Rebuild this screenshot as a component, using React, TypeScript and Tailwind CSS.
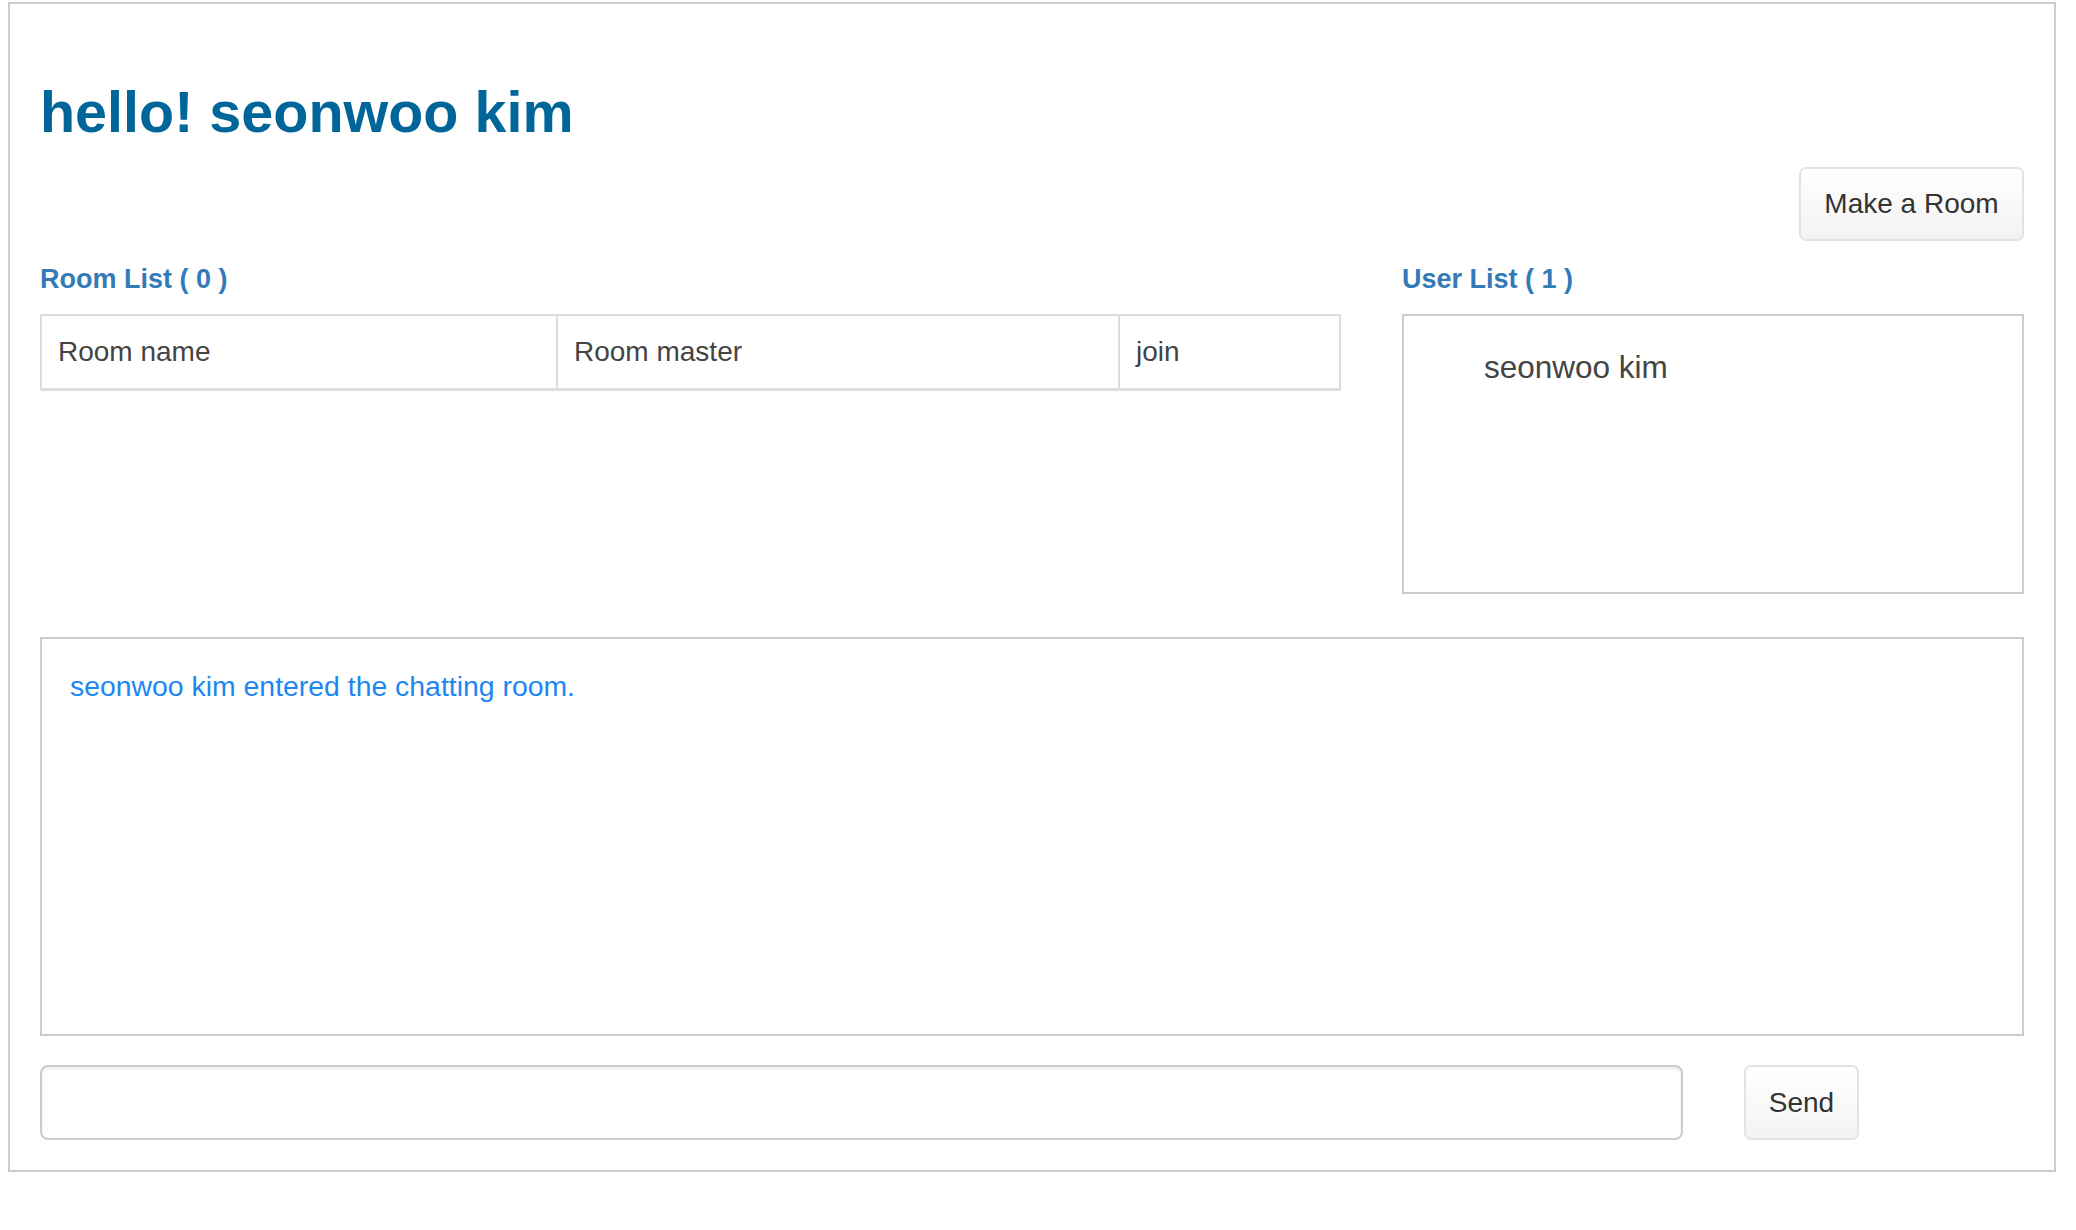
const font = { fontFamily: "'Liberation Sans', Arial, Helvetica, sans-serif" };

function Btn({ children, className = "" }: { children: React.ReactNode; className?: string }) {
  return (
    <button
      className={
        "rounded-[7px] border-2 border-[#e3e3e3] bg-gradient-to-b from-white to-[#f3f3f3] text-[28px] text-[#333] [text-shadow:0_1px_1px_rgba(255,255,255,0.75)] " +
        className
      }
    >
      {children}
    </button>
  );
}

export default function App() {
  const cols = [
    { label: "Room name", w: "w-[514px]" },
    { label: "Room master", w: "w-[562px]" },
    { label: "join", w: "flex-1" },
  ];

  return (
    <div className="min-h-[1230px] bg-white pl-[8px] pt-[2px]" style={font}>
      <div className="flex w-[2048px] flex-col border-2 border-[#cccccc] px-[30px] pb-[30px]">
        <h1 className="mt-[68px] h-[80px] text-[57.5px] font-bold leading-[80px] text-[#006699]">
          hello! seonwoo kim
        </h1>

        <div className="mt-[15px] flex justify-end">
          <Btn className="h-[74px] w-[225px]">Make a Room</Btn>
        </div>

        <div className="mt-[18px] flex justify-between">
          <div className="flex w-[1301px] flex-col">
            <h4 className="h-[40px] text-[27px] font-bold leading-[40px] text-[#337ab7]">Room List ( 0 )</h4>
            <div className="mt-[15px] flex border-x-2 border-t-2 border-b-[3px] border-[#dddddd]">
              {cols.map((c, i) => (
                <div
                  key={c.label}
                  className={
                    c.w +
                    " h-[72px] px-[16px] text-[28px] leading-[72px] text-[#444] " +
                    (i > 0 ? "border-l-2 border-[#dddddd]" : "")
                  }
                >
                  {c.label}
                </div>
              ))}
            </div>
          </div>

          <div className="flex w-[622px] flex-col">
            <h4 className="h-[40px] text-[27px] font-bold leading-[40px] text-[#337ab7]">User List ( 1 )</h4>
            <div className="mt-[15px] h-[280px] border-2 border-[#cccccc] pl-[80px] pt-[31px]">
              <ul>
                <li className="text-[31.5px] leading-[40px] text-[#444]">seonwoo kim</li>
              </ul>
            </div>
          </div>
        </div>

        <div className="mt-[43px] h-[399px] border-2 border-[#cccccc] pl-[28px] pt-[27px]">
          <p className="text-[28.4px] leading-[40px] text-[#1e86f2]">seonwoo kim entered the chatting room.</p>
        </div>

        <div className="mt-[29px] flex items-center">
          <input
            className="h-[75px] w-[1643px] rounded-[8px] border-2 border-[#cccccc] px-[16px] text-[28px] shadow-[inset_0_2px_3px_rgba(0,0,0,0.08)] outline-none"
            type="text"
          />
          <Btn className="ml-[61px] h-[75px] w-[115px]">Send</Btn>
        </div>
      </div>
    </div>
  );
}
